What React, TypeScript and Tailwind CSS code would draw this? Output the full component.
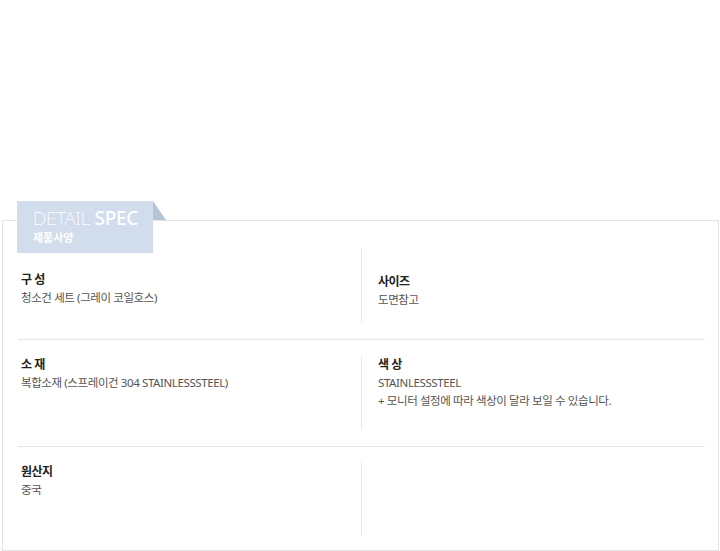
const specs = [
  {
    left: { label: '구 성', lines: ['청소건 세트 (그레이 코일호스)'] },
    right: { label: '사이즈', lines: ['도면참고'] },
    first: true,
  },
  {
    left: { label: '소 재', lines: ['복합소재 (스프레이건 304 STAINLESSSTEEL)'] },
    right: { label: '색 상', lines: ['STAINLESSSTEEL', '+ 모니터 설정에 따라 색상이 달라 보일 수 있습니다.'] },
  },
  {
    left: { label: '원산지', lines: ['중국'] },
    right: null,
  },
];

type Cell = { label: string; lines: string[] } | null;

const SpecCell = ({ cell }: { cell: Cell }) => {
  if (!cell) return null;
  return (
    <div>
      <p className="text-[12px] leading-[18px] font-bold text-[#222] tracking-[-0.5px]">{cell.label}</p>
      {cell.lines.map((line) => (
        <p key={line} className="text-[11.5px] leading-[18px] text-[#555] tracking-[-0.4px]">
          {line}
        </p>
      ))}
    </div>
  );
};

const App = () => {
  return (
    <div
      className="w-[720px] h-[551px] bg-white overflow-hidden pt-[220px]"
      style={{ fontFamily: '"Noto Sans", "Noto Sans CJK KR", sans-serif' }}
    >
      <div className="relative ml-[2px] w-[717px] h-[331px] border border-[#e3e3e3] pt-[27px] pl-[15px] pr-[13px]">
        {/* tab */}
        <div className="absolute -top-[20px] left-[14px] w-[136px] h-[52px] bg-[#d1dcec] pl-[16px] pt-[7px]">
          <p className="text-[19px] leading-[20px] text-white tracking-[-0.3px]">
            <span className="font-extralight">DETAIL </span>
            <span className="font-medium">SPEC</span>
          </p>
          <p className="mt-[3px] text-[11px] leading-[13px] font-bold text-white">제품사양</p>
        </div>
        <div className="absolute -top-[20px] left-[150px] w-0 h-0 border-l-[13px] border-l-[#b7c4d6] border-t-[19px] border-t-transparent" />

        {specs.map((row, i) => (
          <div
            key={i}
            className={`flex ${i < specs.length - 1 ? 'border-b border-[#e6e6e6] pb-[16px]' : ''} ${i > 0 ? 'pt-[15px]' : ''}`}
          >
            <div className={`w-[343px] h-[75px] pl-[3px] ${row.first ? 'pt-[23px]' : 'pt-[1px]'}`}>
              <SpecCell cell={row.left} />
            </div>
            <div className={`flex-1 h-[75px] border-l border-[#ececec] pl-[16px] ${row.first ? 'pt-[25px]' : 'pt-[1px]'}`}>
              <SpecCell cell={row.right} />
            </div>
          </div>
        ))}
      </div>
    </div>
  );
};

export default App;
